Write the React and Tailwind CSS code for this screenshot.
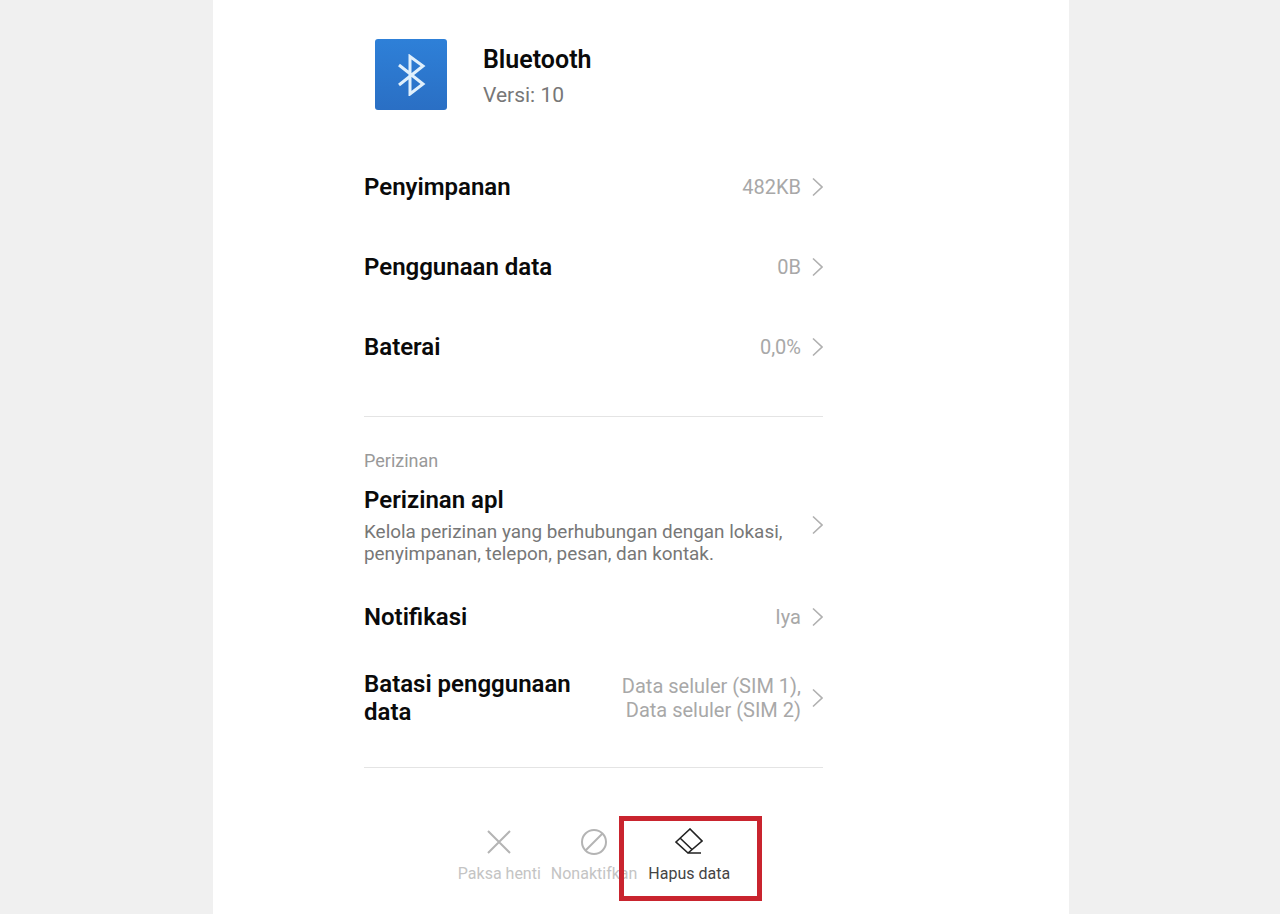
const Chevron = () => (
  <svg width="12" height="20" viewBox="0 0 12 20" fill="none" stroke="#b0b0b0" strokeWidth="1.6" className="shrink-0">
    <path d="M2 1.5 L11 10 L2 18.5" />
  </svg>
);

const SimpleRow = ({ title, value }) => (
  <div className="h-20 flex items-center justify-between">
    <span className="text-[24px] font-semibold text-[#0a0a0a]">{title}</span>
    <div className="flex items-center gap-[10px]">
      <span className="text-[20px] text-[#a8a8a8]">{value}</span>
      <Chevron />
    </div>
  </div>
);

const App = () => {
  return (
    <div className="h-[914px] overflow-hidden bg-[#f0f0f0] font-['Roboto',sans-serif]">
      <div className="relative ml-[213px] h-full w-[856px] bg-white pl-[151px] pr-[246px]">
        {/* App header */}
        <div className="flex h-[147px] items-start pl-[11px] pt-[39px]">
          <div className="flex h-[71px] w-[72px] items-center justify-center rounded-[3px] bg-gradient-to-b from-[#2e80d8] to-[#2a6fc4]">
            <svg width="30" height="42" viewBox="0 0 30 42" fill="none" stroke="#e0f0fc" strokeWidth="3">
              <path d="M3 11 L27 30 L14 40 V2.5 L27 12 L3 31" />
            </svg>
          </div>
          <div className="ml-9 pt-[5px]">
            <div className="text-[25px] leading-[32px] font-semibold text-[#0a0a0a]">Bluetooth</div>
            <div className="mt-[3px] text-[21px] leading-[32px] text-[#777]">Versi: 10</div>
          </div>
        </div>

        <SimpleRow title="Penyimpanan" value="482KB" />
        <SimpleRow title="Penggunaan data" value="0B" />
        <SimpleRow title="Baterai" value="0,0%" />

        <div className="mt-[29px] border-t border-[#e4e4e4]" />

        {/* Permissions */}
        <div className="pt-[34px] text-[18px] leading-[20px] text-[#999]">Perizinan</div>
        <div className="mt-[14px] flex items-center justify-between">
          <div>
            <div className="text-[24px] leading-[30px] font-semibold text-[#0a0a0a]">Perizinan apl</div>
            <div className="mt-[6px] text-[18.9px] leading-[22px] text-[#777]">
              Kelola perizinan yang berhubungan dengan lokasi,
              <br />
              penyimpanan, telepon, pesan, dan kontak.
            </div>
          </div>
          <Chevron />
        </div>

        <div className="mt-[20px] flex h-[64px] items-center justify-between">
          <span className="text-[24px] font-semibold text-[#0a0a0a]">Notifikasi</span>
          <div className="flex items-center gap-[10px]">
            <span className="text-[20px] text-[#a8a8a8]">Iya</span>
            <Chevron />
          </div>
        </div>

        <div className="mt-[21px] flex items-center justify-between">
          <div className="text-[24px] leading-[28px] font-semibold text-[#0a0a0a]">
            Batasi penggunaan
            <br />
            data
          </div>
          <div className="flex items-center gap-[10px]">
            <div className="text-right text-[20px] leading-[24px] text-[#a8a8a8]">
              Data seluler (SIM 1),
              <br />
              Data seluler (SIM 2)
            </div>
            <Chevron />
          </div>
        </div>

        <div className="mt-[41px] border-t border-[#e4e4e4]" />

        {/* Bottom actions */}
        <div className="mt-[60px] flex justify-center gap-[11px] pl-[1px]">
          <div className="-mr-[1px] flex flex-col items-center">
            <svg width="28" height="28" viewBox="0 0 28 28" fill="none" stroke="#b4b4b4" strokeWidth="2">
              <path d="M3 3 L25 25 M25 3 L3 25" />
            </svg>
            <span className="mt-[8px] text-[16px] leading-[20px] text-[#c4c4c4]">Paksa henti</span>
          </div>
          <div className="flex flex-col items-center">
            <svg width="28" height="28" viewBox="0 0 28 28" fill="none" stroke="#b4b4b4" strokeWidth="2">
              <circle cx="14" cy="14" r="12" />
              <path d="M5.5 22.5 L22.5 5.5" />
            </svg>
            <span className="mt-[8px] text-[16px] leading-[20px] text-[#c4c4c4]">Nonaktifkan</span>
          </div>
          <div className="flex flex-col items-center">
            <svg width="28" height="28" viewBox="0 0 28 28" fill="none" stroke="#222" strokeWidth="1.6">
              <path d="M1 14 L15 1 L27 13 L13 25 Z M5 10 L17 21.5 M13 25 H26" />
            </svg>
            <span className="mt-[8px] text-[16px] leading-[20px] text-[#444]">Hapus data</span>
          </div>
        </div>

        {/* Red highlight */}
        <div className="absolute left-[406px] top-[816px] h-[85px] w-[143px] border-[5px] border-[#c9242e]" />
      </div>
    </div>
  );
};

export default App;
